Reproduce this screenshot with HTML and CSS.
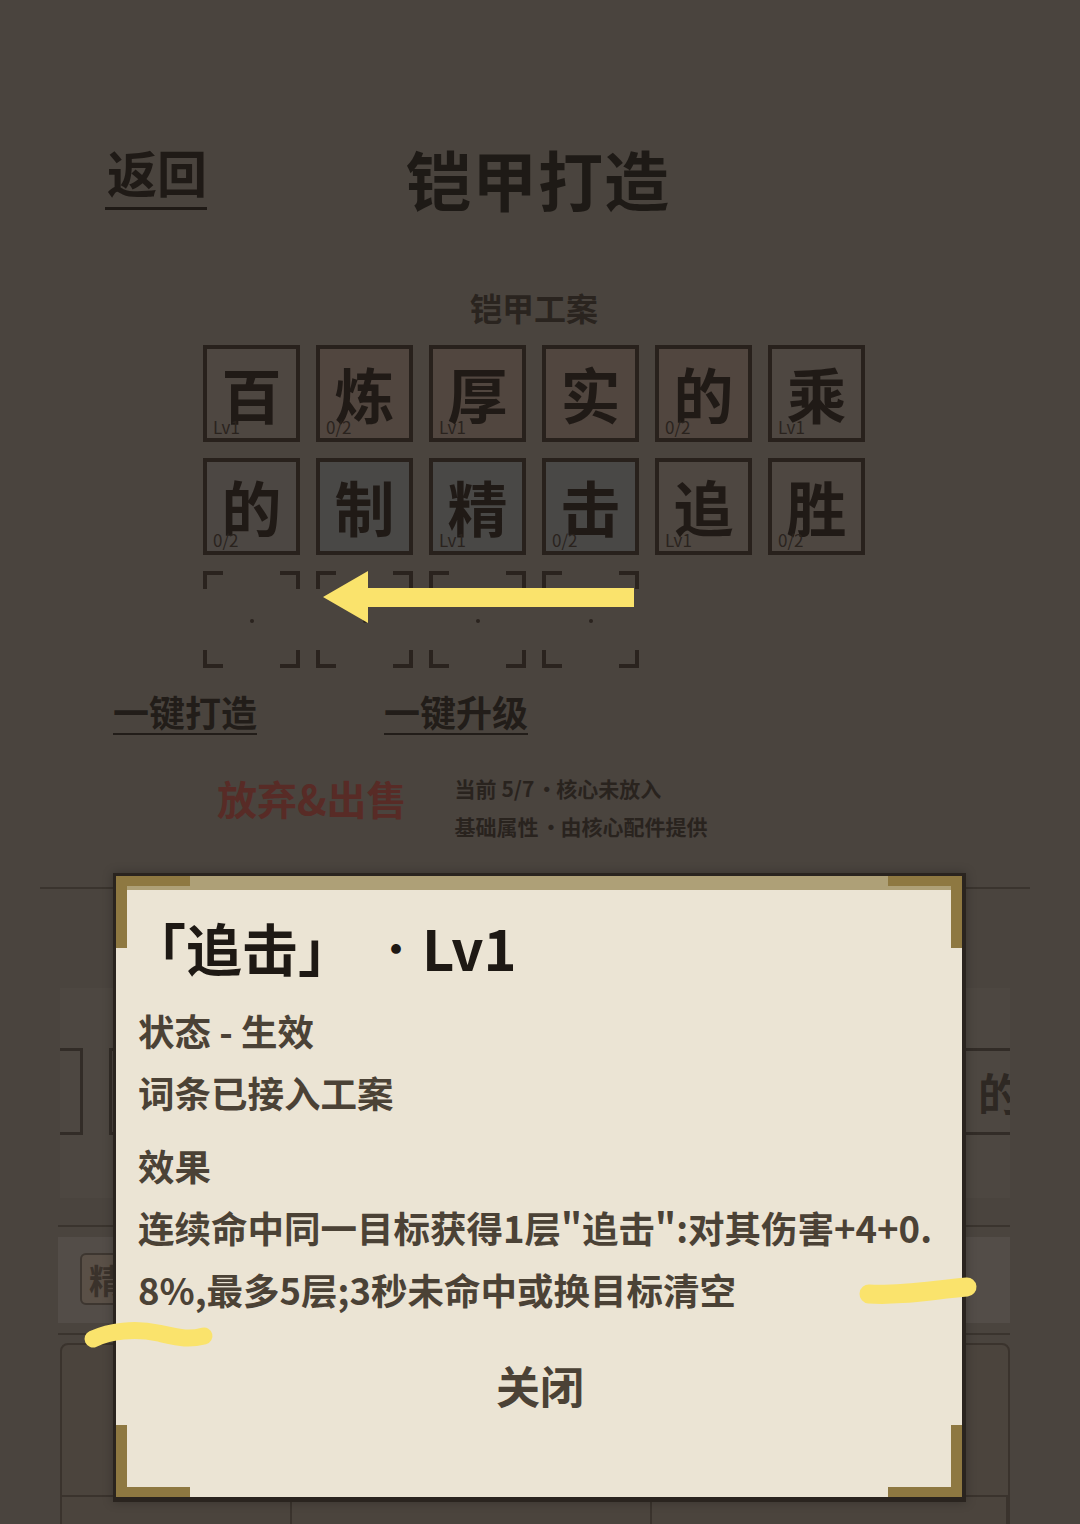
FILE: index.html
```html
<!DOCTYPE html>
<html lang="zh-CN">
<head>
<meta charset="utf-8">
<title>铠甲打造</title>
<link rel="stylesheet" href="styles.css">
</head>
<body>
<div class="screen">
  <header class="top">
    <a class="back">返回</a>
    <h1 class="title">铠甲打造</h1>
    <span class="spacer"></span>
  </header>

  <h2 class="sub">铠甲工案</h2>

  <div class="grid">
    <div class="tile t1"><span class="ch">百</span><span class="lv">Lv1</span></div>
    <div class="tile t2"><span class="ch">炼</span><span class="lv">0/2</span></div>
    <div class="tile t2"><span class="ch">厚</span><span class="lv">Lv1</span></div>
    <div class="tile t2"><span class="ch">实</span></div>
    <div class="tile t2"><span class="ch">的</span><span class="lv">0/2</span></div>
    <div class="tile t1"><span class="ch">乘</span><span class="lv">Lv1</span></div>

    <div class="tile t3"><span class="ch">的</span><span class="lv">0/2</span></div>
    <div class="tile t4"><span class="ch">制</span></div>
    <div class="tile t4"><span class="ch">精</span><span class="lv">Lv1</span></div>
    <div class="tile t4"><span class="ch">击</span><span class="lv">0/2</span></div>
    <div class="tile t1"><span class="ch">追</span><span class="lv">Lv1</span></div>
    <div class="tile t1"><span class="ch">胜</span><span class="lv">0/2</span></div>

    <div class="slot"><i class="dot"></i></div>
    <div class="slot"><i class="dot"></i></div>
    <div class="slot"><i class="dot"></i></div>
    <div class="slot"><i class="dot"></i></div>
  </div>

  <div class="actions">
    <a class="act">一键打造</a>
    <a class="act">一键升级</a>
  </div>

  <div class="sell">
    <span class="sell-btn">放弃&amp;出售</span>
    <div class="info">
      <div>当前 5/7<span class="md">·</span>核心未放入</div>
      <div>基础属性<span class="md">·</span>由核心配件提供</div>
    </div>
  </div>

  <div class="sep"></div>

  <div class="panel">
    <div class="ptiles">
      <div class="ptile first"></div>
      <div class="ptile"></div>
      <div class="ptile"></div>
      <div class="ptile"></div>
      <div class="ptile"></div>
      <div class="ptile"></div>
      <div class="ptile"></div>
      <div class="ptile"></div>
      <div class="ptile"></div>
      <div class="ptile last">的</div>
    </div>
  </div>

  <div class="rule"></div>
  <div class="bar">
    <span class="badge">精</span>
  </div>
  <div class="rule"></div>

  <div class="cards">
    <div class="card-row">
      <div class="cell"></div>
      <div class="cell"></div>
      <div class="cell"></div>
    </div>
  </div>

  <div class="dialog">
    <span class="band"></span>
    <span class="cn tl"></span>
    <span class="cn tr"></span>
    <span class="cn bl"></span>
    <span class="cn br"></span>
    <div class="dlg-title"><span class="q">「追击」</span><span class="mid">·</span><span class="lvl">Lv1</span></div>
    <div class="dlg-text">
      <p>状态 - 生效</p>
      <p>词条已接入工案</p>
    </div>
    <div class="dlg-text effect">
      <p>效果</p>
      <p>连续命中同一目标获得1层"追击":对其伤害+4+0.</p>
      <p>8%,最多5层;3秒未命中或换目标清空</p>
    </div>
    <div class="dlg-close">关闭</div>
  </div>

  <svg class="marks" viewBox="0 0 1080 1524" width="1080" height="1524" aria-hidden="true">
    <polygon points="323,597 368,571 368,588 634,588 634,607 368,607 368,623" fill="#fae36c"/>
    <path d="M93 1339 C 110 1331, 135 1328, 158 1333 S 188 1340, 204 1336" fill="none" stroke="#fae36c" stroke-width="17" stroke-linecap="round"/>
    <path d="M869 1294 C 900 1296, 932 1290, 967 1287" fill="none" stroke="#fae36c" stroke-width="19" stroke-linecap="round"/>
  </svg>
</div>
</body>
</html>
```

FILE: styles.css
```css
* { box-sizing: border-box; }

html, body {
  margin: 0;
  padding: 0;
  background: #4a443e;
}

.screen {
  position: relative;
  width: 1080px;
  height: 1524px;
  overflow: hidden;
  padding-top: 146px;
  background: #4a443e;
  font-family: "Noto Sans CJK SC", "Noto Sans", sans-serif;
  font-weight: 700;
  color: #221c17;
}

/* header */
.top {
  display: grid;
  grid-template-columns: 1fr auto 1fr;
  align-items: start;
  padding: 0 107px;
  height: 66px;
}
.back {
  justify-self: start;
  font-size: 50px;
  line-height: 50px;
  padding-bottom: 11px;
  border-bottom: 3px solid #1f1a16;
  color: #1f1a16;
  margin-left: -2px;
  padding-left: 2px;
}
.title {
  margin: 0 0 0 -4px;
  font-size: 65px;
  line-height: 64px;
  font-weight: 700;
  color: #1e1a16;
  letter-spacing: 1px;
}

.sub {
  margin: 79px 0 0;
  padding-right: 12px;
  text-align: center;
  font-size: 32px;
  line-height: 32px;
  font-weight: 700;
  color: #2a241f;
}

/* grid of tiles */
.grid {
  margin: 22px 0 0 203px;
  display: grid;
  grid-template-columns: repeat(6, 97px);
  grid-auto-rows: 97px;
  gap: 16px;
}
.tile {
  position: relative;
  border: 4px solid #28211c;
  display: flex;
  align-items: center;
  justify-content: center;
  background: #4e4741;
}
.tile.t2 { background: #51463f; }
.tile.t3 { background: #4c4743; }
.tile.t4 { background: #494846; }
.tile .ch {
  font-size: 60px;
  line-height: 60px;
  color: #201a16;
  margin-top: -2px;
}
.tile .lv {
  position: absolute;
  left: 6px;
  bottom: 3px;
  font-size: 17px;
  line-height: 17px;
  font-weight: 400;
  color: #2a231e;
}

.slot {
  display: flex;
  align-items: center;
  justify-content: center;
  background:
    linear-gradient(#2a231e, #2a231e) left top / 20px 4px no-repeat,
    linear-gradient(#2a231e, #2a231e) left top / 4px 18px no-repeat,
    linear-gradient(#2a231e, #2a231e) right top / 20px 4px no-repeat,
    linear-gradient(#2a231e, #2a231e) right top / 4px 18px no-repeat,
    linear-gradient(#2a231e, #2a231e) left bottom / 20px 4px no-repeat,
    linear-gradient(#2a231e, #2a231e) left bottom / 4px 18px no-repeat,
    linear-gradient(#2a231e, #2a231e) right bottom / 20px 4px no-repeat,
    linear-gradient(#2a231e, #2a231e) right bottom / 4px 18px no-repeat;
}
.slot .dot {
  width: 4px;
  height: 4px;
  border-radius: 50%;
  background: #2a231e;
  margin-top: 2px;
}

/* actions */
.actions {
  display: flex;
  gap: 127px;
  margin: 25px 0 0 113px;
}
.act {
  font-size: 36px;
  line-height: 36px;
  padding-bottom: 4px;
  border-bottom: 2px solid #221d19;
  color: #221d19;
}

/* sell row */
.sell {
  display: flex;
  align-items: flex-start;
  gap: 50px;
  margin: 34px 0 0 217px;
}
.sell-btn {
  margin-top: 9px;
  font-size: 40px;
  line-height: 40px;
  color: #582b26;
}
.info {
  margin-left: -2px;
  font-size: 21px;
  line-height: 38px;
  color: #29231e;
  white-space: nowrap;
}
.info .md {
  display: inline-block;
  width: 18px;
  text-align: center;
  margin: 0 2px;
}

.sep {
  margin: 42px 50px 0 40px;
  height: 2px;
  background: #3a342e;
}

/* background panel under the dialog */
.panel {
  margin: 99px 70px 0 60px;
  height: 210px;
  background: #4d4741;
  overflow: hidden;
  padding-top: 60px;
}
.ptiles {
  display: flex;
  justify-content: space-between;
}
.ptile {
  width: 80px;
  height: 87px;
  border: 3px solid #322c27;
  display: flex;
  align-items: center;
  justify-content: center;
  font-size: 44px;
  color: #2e2823;
}
.ptile.first { margin-left: -57px; }
.ptile.last { margin-right: -30px; }

.rule {
  margin: 27px 70px 0 58px;
  height: 2px;
  background: #3a342e;
}
.bar + .rule { margin-top: 10px; }
.bar {
  margin: 10px 70px 0 58px;
  height: 86px;
  background: #534d48;
  padding: 16px 22px;
}
.badge {
  display: inline-flex;
  align-items: center;
  justify-content: center;
  width: 52px;
  height: 52px;
  border: 2px solid #3d3630;
  border-radius: 6px;
  background: #5a5047;
  color: #3a322b;
  font-size: 34px;
}

.cards {
  margin: 8px 70px 0 60px;
  height: 200px;
  border: 2px solid #3a332d;
  border-radius: 8px;
  background: #4b443d;
  padding-top: 150px;
}
.card-row {
  display: grid;
  grid-template-columns: 230px 360px 1fr;
  border-top: 2px solid #3a332d;
  height: 50px;
}
.cell {
  border-right: 2px solid #3a332d;
}

/* dialog */
.dialog {
  position: absolute;
  left: 113px;
  top: 873px;
  width: 853px;
  height: 629px;
  background: #ebe4d4;
  border: 3px solid #2a241f;
  border-bottom-width: 5px;
  border-right-width: 4px;
  padding: 43px 20px 0 22px;
  box-shadow: 0 0 10px rgba(0,0,0,0.25);
}
.band {
  position: absolute;
  left: 0;
  right: 0;
  top: 0;
  height: 14px;
  background: #aea077;
}
.cn {
  position: absolute;
  width: 74px;
  height: 72px;
  border-color: #8e7841;
  border-style: solid;
  border-width: 0;
}
.cn.tl { left: 0; top: 0; border-left-width: 11px; border-top-width: 10px; }
.cn.tr { right: 0; top: 0; border-right-width: 11px; border-top-width: 10px; }
.cn.bl { left: 0; bottom: 0; border-left-width: 11px; border-bottom-width: 10px; }
.cn.br { right: 0; bottom: 0; border-right-width: 11px; border-bottom-width: 10px; }

.dlg-title {
  position: relative;
  margin-left: 20px;
  font-size: 56px;
  line-height: 56px;
  color: #1e1914;
  display: flex;
  align-items: center;
}
.dlg-title .q {
  font-feature-settings: "halt" 1;
}
.dlg-title .mid {
  width: 40px;
  text-align: center;
  margin-left: 50px;
  margin-right: 6px;
  font-size: 38px;
}
.dlg-text {
  margin-top: 25px;
  font-size: 36.5px;
  line-height: 62px;
  color: #4b4236;
  white-space: nowrap;
}
.dlg-text p { margin: 0; }
.dlg-text.effect { margin-top: 11px; }

.dlg-close {
  margin-top: 42px;
  text-align: center;
  font-size: 44px;
  line-height: 44px;
  color: #4b4236;
}

.marks {
  position: absolute;
  left: 0;
  top: 0;
  pointer-events: none;
}
```
